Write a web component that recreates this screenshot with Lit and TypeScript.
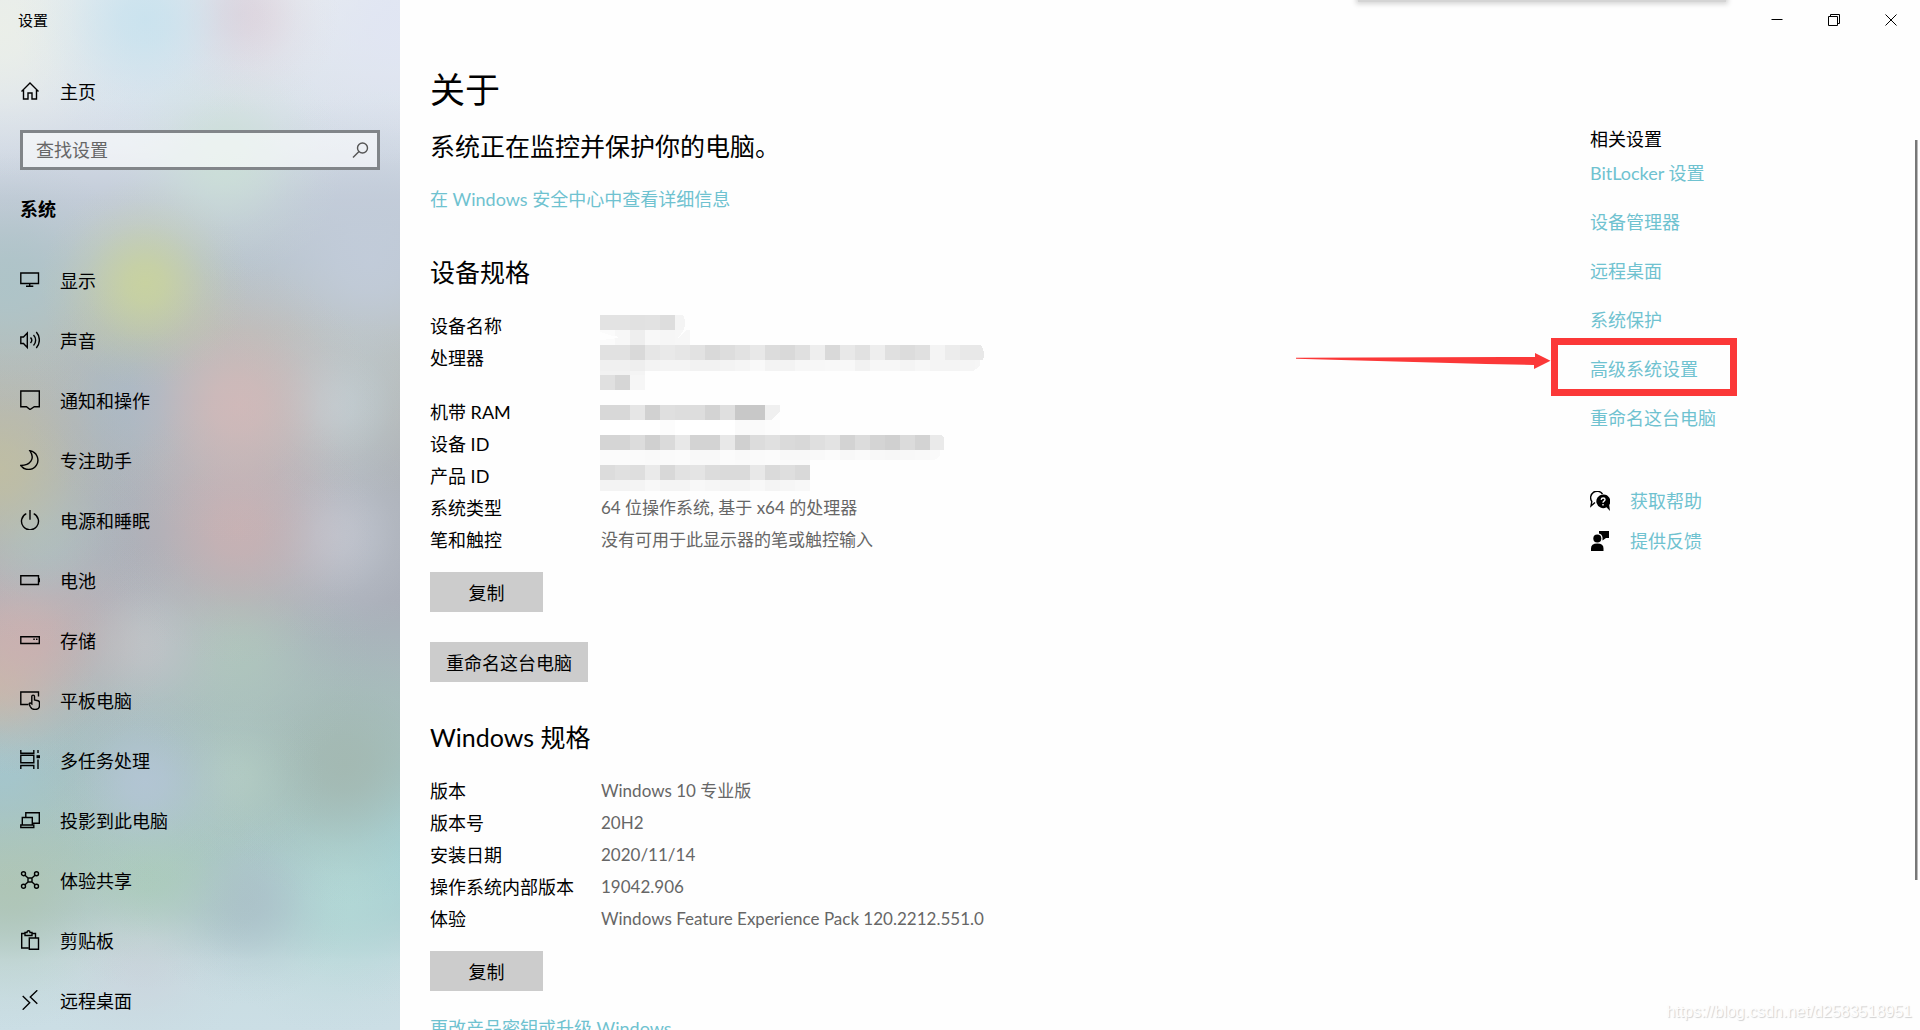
import { LitElement, html, svg, css, unsafeCSS, type SVGTemplateResult } from "lit";
import { customElement } from "lit/decorators.js";

const icons: Record<string, SVGTemplateResult> = {
  home: svg`<path d="M1.5 10.5 10 2l8.500 8.500M3.500 9v9h4.500v-6h4v6h4.500V9"/>`,
  display: svg`<path d="M.8 3h17.700v10.500H.8zM9.700 13.500v2.500M6 16.200h7.300"/>`,
  sound: svg`<path d="M.8 7h2.700l3.800-4v14.500l-3.800-4H.8zM10.500 7.500a4 4 0 0 1 0 5.500M13.500 5a7.500 7.500 0 0 1 0 10.500M16.300 2a12 12 0 0 1 0 16"/>`,
  notify: svg`<path d="M.8 1h18.500v15.700h-5L10 19.500l-3.500-2.800H.8z"/>`,
  moon: svg`<path d="M10 .8A9.400 9.400 0 1 1 .8 15.500C10 15.500 15.500 9 10 .8z"/>`,
  power: svg`<path d="M10 0v9.700M6.300 3.700a8.500 8.500 0 1 0 7.400 0"/>`,
  battery: svg`<path d="M.8 5.800h17.700v8.700H.8z"/><path d="M19.200 8.200v4" stroke-width="1.600"/>`,
  storage: svg`<path d="M.8 6.800h18.500v6.700H.8z"/><path d="M13.300 9.300h1.500M16 9.300h1.500" stroke-width="1.500"/>`,
  tablet: svg`<path d="M8.500 14.500H.8V2h17.700v4.500"/><path d="M11.800 14V6.500a1.300 1.300 0 0 1 2.700 0V10l3.500.8q1.500.4 1.500 2v2.700q0 4-4.500 4-3.500 0-4.800-3l-.9-2.300q-.2-1.400 1-1.200z"/>`,
  multi: svg`<path d="M.8 0v3.200h13V0M.8 5.300h13v7.500H.8zM.8 19v-3.500h13V19M18 0v3M18 9.500V19"/><path d="M16.500 6.700h3.500" stroke-width="3"/>`,
  project: svg`<path d="M5.800 7V2.800h13.500v10.500h-6.500M2.300 15V7.500h10V15M.8 15h13v2.500H.8z"/>`,
  share: svg`<circle cx="3.500" cy="3.700" r="2"/><circle cx="16.500" cy="3.700" r="2"/><circle cx="3.500" cy="16.300" r="2"/><circle cx="16.500" cy="16.300" r="2"/><path d="M8 8h4v4H8zM5 5.200 8 8M15 5.200 12 8M5 14.800 8 12M15 14.800 12 12"/>`,
  clipboard: svg`<path d="M8.500 18H1.700V3.500H5M12 3.500h3.500v4M5 5.500v-3h2Q7 .8 8.500.8T10 2.500h2v3zM9.300 8h9.200v11.300H9.300z"/>`,
  remote: svg`<path d="m2.700 6 7 6.700-7 7M17.300.3l-7 6.700 7 6.700"/>`,
};

const navItems: [string, string][] = [
  ["display", "显示"],
  ["sound", "声音"],
  ["notify", "通知和操作"],
  ["moon", "专注助手"],
  ["power", "电源和睡眠"],
  ["battery", "电池"],
  ["storage", "存储"],
  ["tablet", "平板电脑"],
  ["multi", "多任务处理"],
  ["project", "投影到此电脑"],
  ["share", "体验共享"],
  ["clipboard", "剪贴板"],
  ["remote", "远程桌面"],
];

const deviceSpecs: [string, string][] = [
  ["设备名称", ""],
  ["处理器", ""],
  ["机带 RAM", ""],
  ["设备 ID", ""],
  ["产品 ID", ""],
  ["系统类型", "64 位操作系统, 基于 x64 的处理器"],
  ["笔和触控", "没有可用于此显示器的笔或触控输入"],
];

const windowsSpecs: [string, string][] = [
  ["版本", "Windows 10 专业版"],
  ["版本号", "20H2"],
  ["安装日期", "2020/11/14"],
  ["操作系统内部版本", "19042.906"],
  ["体验", "Windows Feature Experience Pack 120.2212.551.0"],
];

const relatedLinks = [
  "BitLocker 设置",
  "设备管理器",
  "远程桌面",
  "系统保护",
  "高级系统设置",
  "重命名这台电脑",
];

// Masked values: [top, cell height, width of the run, grey level of each 15px cell]
const mosaic: [number, number, number, string][] = [
  [0, 15, 85, "e3 e3 e1 e2 dd f4"],
  [15, 15, 90, "fb f7 ee f8 f6 f7"],
  [30, 15, 385, "e1 e1 d9 e6 e9 e6 e2 d9 dd e2 e8 dc d9 e0 ee d9 e8 e1 ee e0 dc e0 f4 ec e8 e8"],
  [45, 11, 380, "f0 f0 ee f3 f4 f4 f2 f2 f3 f5 f9 f3 f3 f7 f7 f8 f8 f2 f7 f7 f4 f7 f4 f4 f5 f6"],
  [56, 4, 45, "f2 f2 f4"],
  [60, 15, 45, "e0 d6 f6"],
  [90, 15, 180, "d8 d8 e6 d1 df dd dd d3 df c8 c8 f0"],
  [105, 15, 180, "ff ff ff ff fc ff ff ff ff fa fa fc"],
  [120, 15, 345, "d5 d5 dc d0 da e8 d3 d3 e8 d0 dc e0 da d8 df e3 d3 dc d4 d0 db d3 ea"],
  [135, 10, 340, "fb fb fa f9 fa fb f8 f8 fb f9 fa fb f8 f8 f9 fb f8 fa f8 f7 f8 f9 fa"],
  [145, 5, 210, "fb fb fb fa fa fb f9 f9 fb fa fa fb fa fa"],
  [150, 15, 210, "dc e0 de ea d8 e2 e4 dc da da e8 da de d9"],
  [165, 11, 210, "f3 f3 f4 f8 f4 f4 f8 f6 f4 f4 f8 f4 f6 f8"],
];

// Soft colour spots of the translucent sidebar: [x, y, radius, colour]
const spots: [number, number, number, string][] = [
  [145, 283, 105, "#c9d39d"],
  [145, 20, 130, "#c8e2ee"],
  [240, 15, 100, "#ddd2dc"],
  [0, 30, 150, "#ebefe8"],
  [400, 20, 150, "#e0e5f3"],
  [225, 160, 120, "#cbdfd7"],
  [238, 405, 140, "#d2b9b9"],
  [238, 530, 135, "#c9b1b3"],
  [335, 405, 100, "#c1ced3"],
  [335, 535, 105, "#c1c6d0"],
  [145, 400, 120, "#a8b9c7"],
  [0, 470, 130, "#c0bea2"],
  [10, 285, 130, "#adc4c8"],
  [40, 535, 110, "#adbfc3"],
  [25, 632, 145, "#ccb0b0"],
  [0, 680, 95, "#c6bca8"],
  [145, 645, 100, "#bfc4c8"],
  [235, 650, 135, "#afc6bd"],
  [145, 782, 105, "#b3c5d5"],
  [235, 778, 90, "#b2cbc3"],
  [0, 760, 130, "#a4c6ce"],
  [345, 765, 140, "#a3b8b1"],
  [10, 880, 150, "#afc5b4"],
  [150, 870, 120, "#abcbbb"],
  [245, 900, 105, "#abc1c9"],
  [335, 895, 140, "#b2d8d6"],
  [400, 845, 160, "#a5d2d7"],
  [140, 955, 110, "#cbd4dd"],
  [370, 260, 170, "#c2ccda"],
];

const spotLayers = unsafeCSS(
  spots
    .map(
      ([x, y, r, c]) =>
        `radial-gradient(circle ${r}px at ${x}px ${y}px, ${c}e8, ${c}cc 18%, ${c}88 38%, ${c}40 58%, ${c}12 80%, ${c}00)`
    )
    .join(",")
);

@customElement("app-root")
export class AppRoot extends LitElement {
  static styles = css`
    :host {
      display: block;
      font-family: Lato, "Noto Sans CJK SC", sans-serif;
      font-size: 18px;
      line-height: 22px;
      color: #000;
      background: #fefefe;
    }
    * {
      box-sizing: border-box;
    }
    h1,
    h2,
    h3,
    p {
      margin: 0;
      font-weight: 400;
    }
    a {
      color: #6fc2d0;
      text-decoration: none;
    }
    button,
    input {
      font: inherit;
      color: inherit;
      border: 0;
      border-radius: 0;
      margin: 0;
    }
    .window {
      position: relative;
      display: grid;
      grid-template-columns: 400px minmax(0, 1fr);
      height: 100vh;
      overflow: hidden;
    }
    .icon {
      display: block;
      flex: none;
      width: 20px;
      height: 20px;
      fill: none;
      stroke: #000;
      stroke-width: 1.4;
    }

    .sidebar {
      overflow: hidden;
      padding: 0 20px;
      background:
        ${spotLayers},
        linear-gradient(
          #e6ebf0 0,
          #dce3ec 100px,
          #d2dae5 150px,
          #c3ccd8 200px,
          #b9c4cd 260px,
          #b8beba 330px,
          #b3b7b8 420px,
          #adb2ba 500px,
          #aaafb9 600px,
          #a8bcbe 690px,
          #a5bfbd 770px,
          #a8c6c4 850px,
          #b2cbce 910px,
          #c8dce1 960px,
          #cbdee5 1030px
        );
    }
    .app-title {
      margin: 0 -2px;
      padding-top: 9px;
      height: 61px;
      font-size: 15px;
    }
    .nav-link {
      display: flex;
      align-items: center;
      gap: 20px;
      height: 60px;
      color: #000;
    }
    .nav-link span {
      padding-top: 2px;
    }
    .search {
      display: flex;
      align-items: center;
      height: 40px;
      margin-top: 9px;
      border: 3px solid #818589;
      background: rgba(255, 255, 255, 0.6);
      background-clip: padding-box;
    }
    .search-input {
      flex: 1;
      min-width: 0;
      height: 100%;
      padding: 0 13px;
      background: none;
      outline: 0;
    }
    .search-input::placeholder {
      color: #666;
      opacity: 1;
    }
    .search-button {
      padding: 0 7px;
      background: none;
    }
    .search-button .icon {
      stroke: #555;
    }
    .category {
      margin: 27px 0 29px;
      font-size: 18px;
      font-weight: 700;
      line-height: 24px;
    }

    .main {
      display: grid;
      grid-template-columns: minmax(0, 1fr) 330px;
      grid-template-rows: 60px 1fr;
      padding-left: 30px;
      min-height: 0;
    }
    .caption {
      grid-column: 1 / -1;
      display: flex;
      justify-content: flex-end;
      align-items: flex-start;
      padding-right: 1px;
    }
    .caption-button {
      display: grid;
      place-items: center;
      width: 57px;
      height: 40px;
      padding: 0;
      background: none;
    }
    .caption-button .icon {
      width: 12px;
      height: 12px;
      stroke-width: 1;
    }
    .page-title {
      font-size: 35px;
      line-height: 58px;
    }
    .subtitle {
      font-size: 25px;
      line-height: 32px;
      margin: 12px 0 26px;
    }
    .section-title {
      font-size: 25px;
      line-height: 32px;
      margin: 46px 0 27px;
    }
    .specs {
      position: relative;
    }
    .spec-table {
      border-collapse: collapse;
    }
    .spec-table th {
      width: 171px;
      padding: 0 0 10px;
      font-weight: 400;
      text-align: left;
      vertical-align: top;
      white-space: nowrap;
    }
    .spec-table td {
      padding: 0 0 10px;
      font-size: 17px;
      color: #666;
    }
    .tall th {
      height: 54px;
    }
    .mosaic {
      position: absolute;
      left: 170px;
      top: 0;
      width: 390px;
      height: 180px;
    }
    .push {
      display: block;
      min-width: 113px;
      height: 40px;
      margin-top: 11px;
      padding: 2px 16px 0;
      background: #ccc;
    }
    .push + .push {
      margin-top: 30px;
    }
    .push + .section-title {
      margin-top: 39px;
    }
    .upgrade {
      display: block;
      margin-top: 26px;
      white-space: nowrap;
    }

    .related {
      padding-top: 68px;
    }
    .related-title {
      font-size: 18px;
      line-height: 22px;
      margin-bottom: 12px;
    }
    .related-list {
      display: flex;
      flex-direction: column;
      align-items: flex-start;
      gap: 27px;
    }
    .marked {
      position: relative;
    }
    .marker {
      position: absolute;
      left: -294px;
      top: -20px;
      width: 442px;
      height: 58px;
      pointer-events: none;
    }
    .support {
      display: flex;
      flex-direction: column;
      gap: 18px;
      margin-top: 61px;
    }
    .support-link {
      display: flex;
      align-items: center;
      gap: 20px;
    }
    .solid {
      fill: #000;
    }

    .scrollbar {
      position: absolute;
      right: 2px;
      top: 140px;
      bottom: 150px;
      width: 3px;
      background: linear-gradient(90deg, #777 2px, #bbb 2px);
    }
    .edge-shadow {
      position: absolute;
      right: 194px;
      top: -10px;
      width: 368px;
      height: 12px;
      background: #d4d4d4;
      box-shadow: 0 0 5px 2px #d4d4d4;
    }
    .watermark {
      position: absolute;
      right: 8px;
      bottom: 7px;
      font-family: "Liberation Sans", sans-serif;
      font-size: 16px;
      color: #fdfdfd;
      text-shadow: 1px 1px 1px #d0d0d0;
    }
  `;

  private icon(name: string) {
    return html`<svg class="icon" viewBox="0 0 20 20" aria-hidden="true">${icons[name]}</svg>`;
  }

  private specTable(rows: [string, string][]) {
    return html`<table class="spec-table">
      <tbody>
        ${rows.map(
          ([name, value]) => html`<tr class=${name === "处理器" ? "tall" : ""}>
            <th scope="row">${name}</th>
            <td>${value}</td>
          </tr>`
        )}
      </tbody>
    </table>`;
  }

  private mosaicView() {
    return html`<svg class="mosaic" viewBox="0 0 390 180" shape-rendering="crispEdges" aria-hidden="true">
      ${mosaic.map(([top, height, width, cells]) =>
        cells.split(" ").map(
          (g, i) => svg`<rect x=${i * 15} y=${top} width=${Math.min(15, width - i * 15)} height=${height} fill=${"#" + g + g + g}></rect>`
        )
      )}
      <path fill="#fefefe" d="M0 17q10 4 20 5l-8 2-12 1zM86 0v15l-8 8q7-8 7-15 0-5-2-8zM386 30v27h-15q13-6 13-17 0-6-3-10zM180 96v9h-8zM345 120v25l-12 1q11-6 11-14V122l-3-2z" />
    </svg>`;
  }

  private marker() {
    return html`<svg class="marker" viewBox="0 0 442 58" aria-hidden="true">
      <path fill="#fb3838" d="M0 19.700 210 19h29v-4l15.500 7.700L238 31v-4l-48-1L0 20.700z" />
      <rect x="258.500" y="3.500" width="179" height="51" fill="none" stroke="#fb3838" stroke-width="7" />
    </svg>`;
  }

  render() {
    return html`
      <div class="window">
        <aside class="sidebar">
          <p class="app-title">设置</p>
          <a class="nav-link" href="#home">${this.icon("home")}<span>主页</span></a>
          <div class="search">
            <input class="search-input" type="text" placeholder="查找设置" aria-label="查找设置" />
            <button class="search-button" aria-label="查找">
              <svg class="icon" viewBox="0 0 20 20" aria-hidden="true">
                <circle cx="12.500" cy="8" r="5" />
                <path d="m9 11.500-6 6" />
              </svg>
            </button>
          </div>
          <h2 class="category">系统</h2>
          <nav>
            ${navItems.map(
              ([name, label]) => html`<a class="nav-link" href="#${name}">${this.icon(name)}<span>${label}</span></a>`
            )}
          </nav>
        </aside>

        <main class="main">
          <div class="caption">
            <button class="caption-button" aria-label="最小化">
              <svg class="icon" viewBox="0 0 12 12"><path d="M.5 5.500h11" /></svg>
            </button>
            <button class="caption-button" aria-label="还原">
              <svg class="icon" viewBox="0 0 12 12"><path d="M.5 2.500h9v9h-9zM2.500 2.500v-2h9v9h-2" /></svg>
            </button>
            <button class="caption-button" aria-label="关闭">
              <svg class="icon" viewBox="0 0 12 12"><path d="m.5.500 11 11m0-11-11 11" /></svg>
            </button>
          </div>

          <div class="content">
            <h1 class="page-title">关于</h1>
            <p class="subtitle">系统正在监控并保护你的电脑。</p>
            <a href="#security">在 Windows 安全中心中查看详细信息</a>

            <h2 class="section-title">设备规格</h2>
            <div class="specs">${this.specTable(deviceSpecs)} ${this.mosaicView()}</div>
            <button class="push">复制</button>
            <button class="push">重命名这台电脑</button>

            <h2 class="section-title">Windows 规格</h2>
            ${this.specTable(windowsSpecs)}
            <button class="push">复制</button>
            <a class="upgrade" href="#upgrade">更改产品密钥或升级 Windows</a>
          </div>

          <aside class="related">
            <h3 class="related-title">相关设置</h3>
            <div class="related-list">
              ${relatedLinks.map((label) =>
                label === "高级系统设置"
                  ? html`<div class="marked"><a href="#advanced">${label}</a>${this.marker()}</div>`
                  : html`<a href="#related">${label}</a>`
              )}
            </div>
            <div class="support">
              <a class="support-link" href="#help">
                <svg class="icon" viewBox="0 0 20 20" aria-hidden="true">
                  <path d="M5 11.500 1 15l.8-4.500A6.300 6.300 0 1 1 12.500 3" />
                  <path class="solid" stroke="none" d="M13 3.500a6.800 6.800 0 1 0 3.500 12.700L20 20l-.8-6A6.800 6.800 0 0 0 13 3.500z" />
                  <path d="M11.200 8.800q.2-1.800 2-1.800t1.800 1.500q0 1-1 1.600t-1 1.700M13 13v1.500" stroke="#fff" />
                </svg>
                <span>获取帮助</span>
              </a>
              <a class="support-link" href="#feedback">
                <svg class="icon" viewBox="0 0 20 20" aria-hidden="true">
                  <g class="solid" stroke="none">
                    <circle cx="7.300" cy="7.500" r="4" />
                    <path d="M1 20v-2.500q0-5 6.300-5t6.200 5V20zM9 0h10v7h-3l-3.500 2.500V6.500Q12 3 9 2.500z" />
                  </g>
                </svg>
                <span>提供反馈</span>
              </a>
            </div>
          </aside>
        </main>

        <div class="edge-shadow"></div>
        <div class="scrollbar"></div>
        <div class="watermark">https://blog.csdn.net/d2583518951</div>
      </div>
    `;
  }
}
